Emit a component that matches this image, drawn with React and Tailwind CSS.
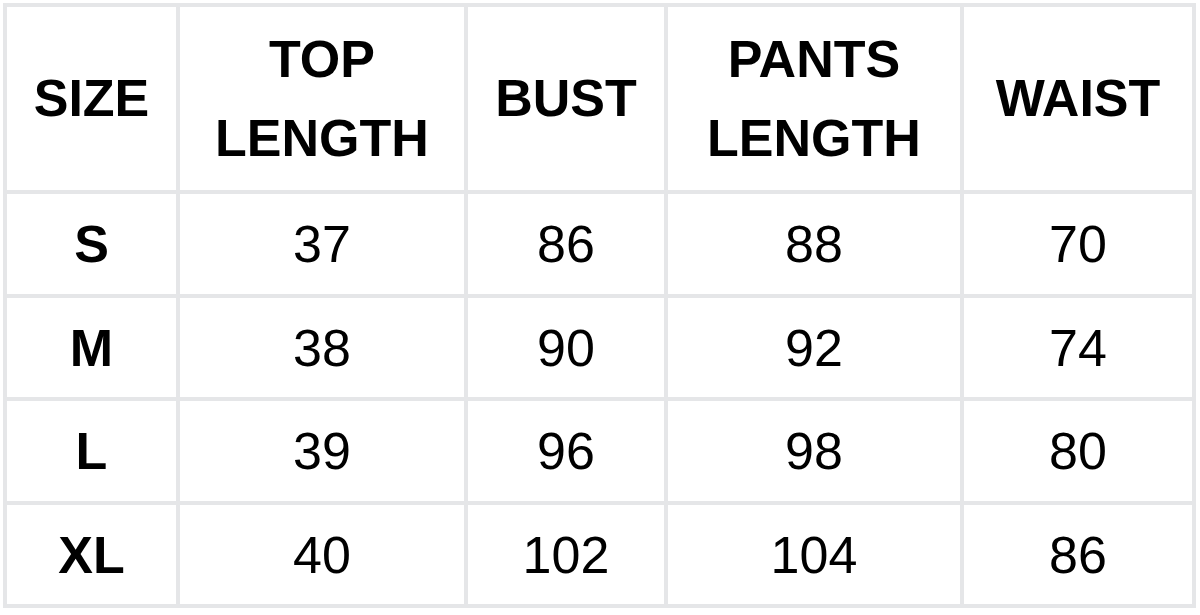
const headers = [["SIZE"], ["TOP", "LENGTH"], ["BUST"], ["PANTS", "LENGTH"], ["WAIST"]];

const rows = [
  ["S", "37", "86", "88", "70"],
  ["M", "38", "90", "92", "74"],
  ["L", "39", "96", "98", "80"],
  ["XL", "40", "102", "104", "86"],
];

export default function App() {
  return (
    <div className="w-[1200px] h-[615px] bg-white pt-[3px] pl-[3px] text-black" style={{ fontFamily: '"Liberation Sans", Arial, sans-serif' }}>
      <div className="grid w-fit grid-cols-[169px_284px_196px_292px_228px] grid-rows-[183px_100px_99px_100px_99px] gap-[4px] bg-[#e5e6e8] p-[4px]">
        {headers.map((lines, i) => (
          <div key={i} className="flex flex-col items-center justify-center bg-white text-[52px] font-bold leading-[79px]">
            {lines.map((l) => (
              <span key={l}>{l}</span>
            ))}
          </div>
        ))}
        {rows.map((row) =>
          row.map((cell, j) => (
            <div
              key={row[0] + j}
              className={`flex items-center justify-center bg-white text-[52px] leading-none ${j === 0 ? "font-bold" : "font-normal"}`}
            >
              {cell}
            </div>
          ))
        )}
      </div>
    </div>
  );
}
